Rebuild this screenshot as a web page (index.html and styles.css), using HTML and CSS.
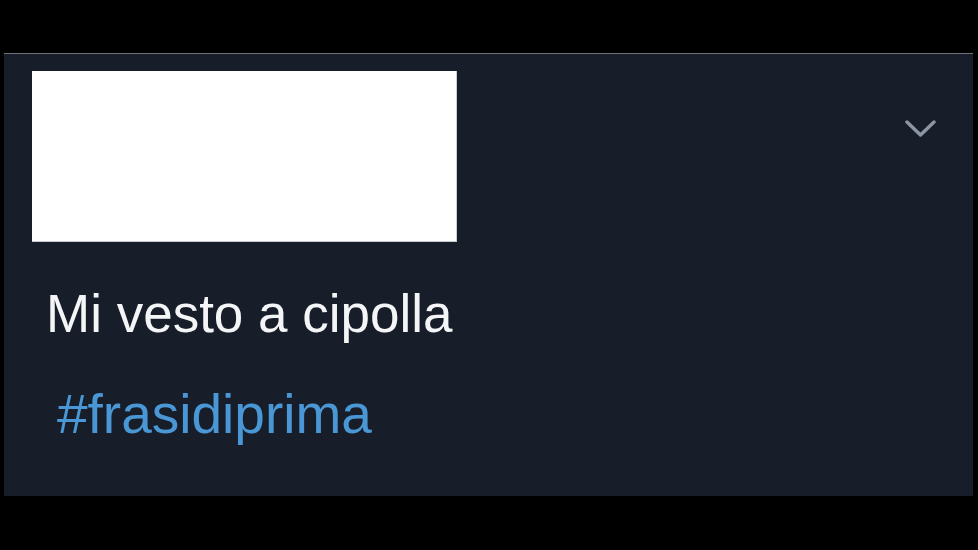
FILE: index.html
```html
<!DOCTYPE html>
<html lang="en">
<head>
    <meta charset="UTF-8">
    <meta name="viewport" content="width=device-width, initial-scale=1.0">
    <title>Tweet</title>
    <link rel="stylesheet" href="styles.css">
</head>
<body>
    <div class="tweet">
        <div class="tweet-header">
            <div class="hidden-user"></div>
            <svg class="chevron" width="31" height="19" viewBox="0 0 31 19">
                <path d="M2 3 L15.5 16 L29 3" fill="none" stroke="#8d97a4" stroke-width="3.4" stroke-linecap="round" stroke-linejoin="round"/>
            </svg>
        </div>

        <p class="tweet-text">Mi vesto a cipolla</p>
        <p class="tweet-tag">#frasidiprima</p>
    </div>
</body>
</html>
```

FILE: styles.css
```css
* {
    margin: 0;
    padding: 0;
    box-sizing: border-box;
}

body {
    font-family: 'Liberation Sans', Arial, sans-serif;
    background: #000;
    width: 978px;
    height: 550px;
    overflow: hidden;
}

.tweet {
    margin: 53px 5px 0 4px;
    height: 443px;
    background: #181e29;
    border-top: 1px solid #6d7178;
    padding: 17px 28px 0;
}

.tweet-header {
    display: flex;
    align-items: flex-start;
}

.hidden-user {
    width: 425px;
    height: 171px;
    background: #fff;
    border: 1px solid #c9ccd2;
    border-top: none;
    border-left: none;
}

.chevron {
    margin-left: auto;
    margin-top: 48px;
    margin-right: 9px;
}

.tweet-text {
    color: #f4f5f7;
    font-size: 53px;
    margin-top: 41px;
    padding-left: 14px;
}

.tweet-tag {
    color: #4a97d6;
    font-size: 55px;
    margin-top: 38px;
    padding-left: 25px;
}
```
